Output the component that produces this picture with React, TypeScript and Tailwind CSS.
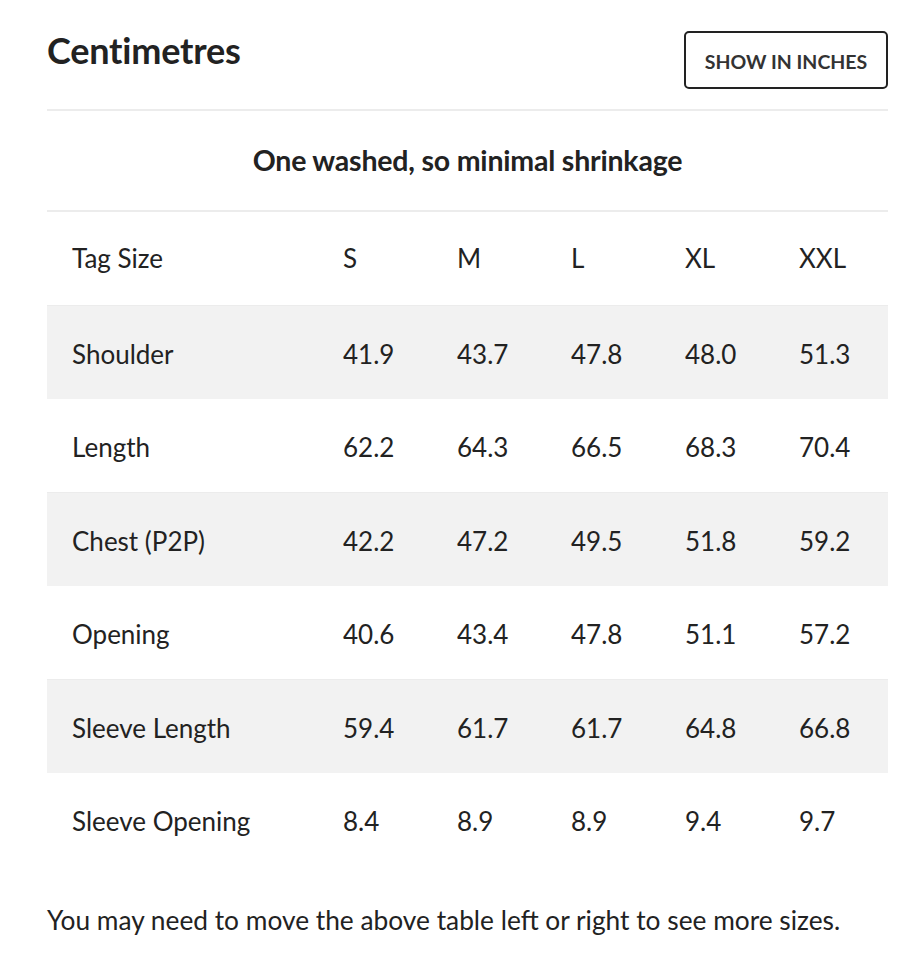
import React from "react";

const sizes = ["S", "M", "L", "XL", "XXL"];
const rows: [string, string[]][] = [
  ["Shoulder", ["41.9", "43.7", "47.8", "48.0", "51.3"]],
  ["Length", ["62.2", "64.3", "66.5", "68.3", "70.4"]],
  ["Chest (P2P)", ["42.2", "47.2", "49.5", "51.8", "59.2"]],
  ["Opening", ["40.6", "43.4", "47.8", "51.1", "57.2"]],
  ["Sleeve Length", ["59.4", "61.7", "61.7", "64.8", "66.8"]],
  ["Sleeve Opening", ["8.4", "8.9", "8.9", "9.4", "9.7"]],
];

function Row({ label, values, gray }: { label: string; values: string[]; gray: boolean }) {
  return (
    <div className={`flex h-[93.5px] items-center pt-[4px] ${gray ? "bg-[#f2f2f2] border-t border-[#ececec]" : ""}`}>
      <div className="w-[271px] pl-[25px]">{label}</div>
      {values.map((v, i) => (
        <div key={i} className="w-[114px] pl-[25px]">
          {v}
        </div>
      ))}
    </div>
  );
}

export default function App() {
  return (
    <div
      className="min-h-[974px] w-[922px] bg-white text-[#222222]"
      style={{ fontFamily: "Lato, 'Liberation Sans', sans-serif" }}
    >
      <div className="ml-[47px] w-[841px]">
        <div className="flex items-start justify-between pt-[31px]">
          <h1 className="mt-[-1px] text-[36px] font-bold leading-[40px] tracking-[-0.2px]">Centimetres</h1>
          <button className="flex h-[58px] w-[204px] items-center justify-center rounded-[5px] border-2 border-[#222222] pt-[3px] text-[19.5px] font-bold text-[#333333]">
            SHOW IN INCHES
          </button>
        </div>
        <div className="mt-[20px] h-[2px] bg-[#ececec]" />
        <div className="flex h-[99px] items-center justify-center text-[28.5px] font-bold tracking-[-0.2px]">
          One washed, so minimal shrinkage
        </div>
        <div className="h-[2px] bg-[#ececec]" />
        <div className="text-[26px]">
          <div className="flex h-[93px] items-center">
            <div className="w-[271px] pl-[25px]">Tag Size</div>
            {sizes.map((s) => (
              <div key={s} className="w-[114px] pl-[25px]">
                {s}
              </div>
            ))}
          </div>
          {rows.map(([label, values], i) => (
            <Row key={label} label={label} values={values} gray={i % 2 === 0} />
          ))}
        </div>
        <p className="mt-[35px] text-[26.3px]">
          You may need to move the above table left or right to see more sizes.
        </p>
      </div>
    </div>
  );
}
